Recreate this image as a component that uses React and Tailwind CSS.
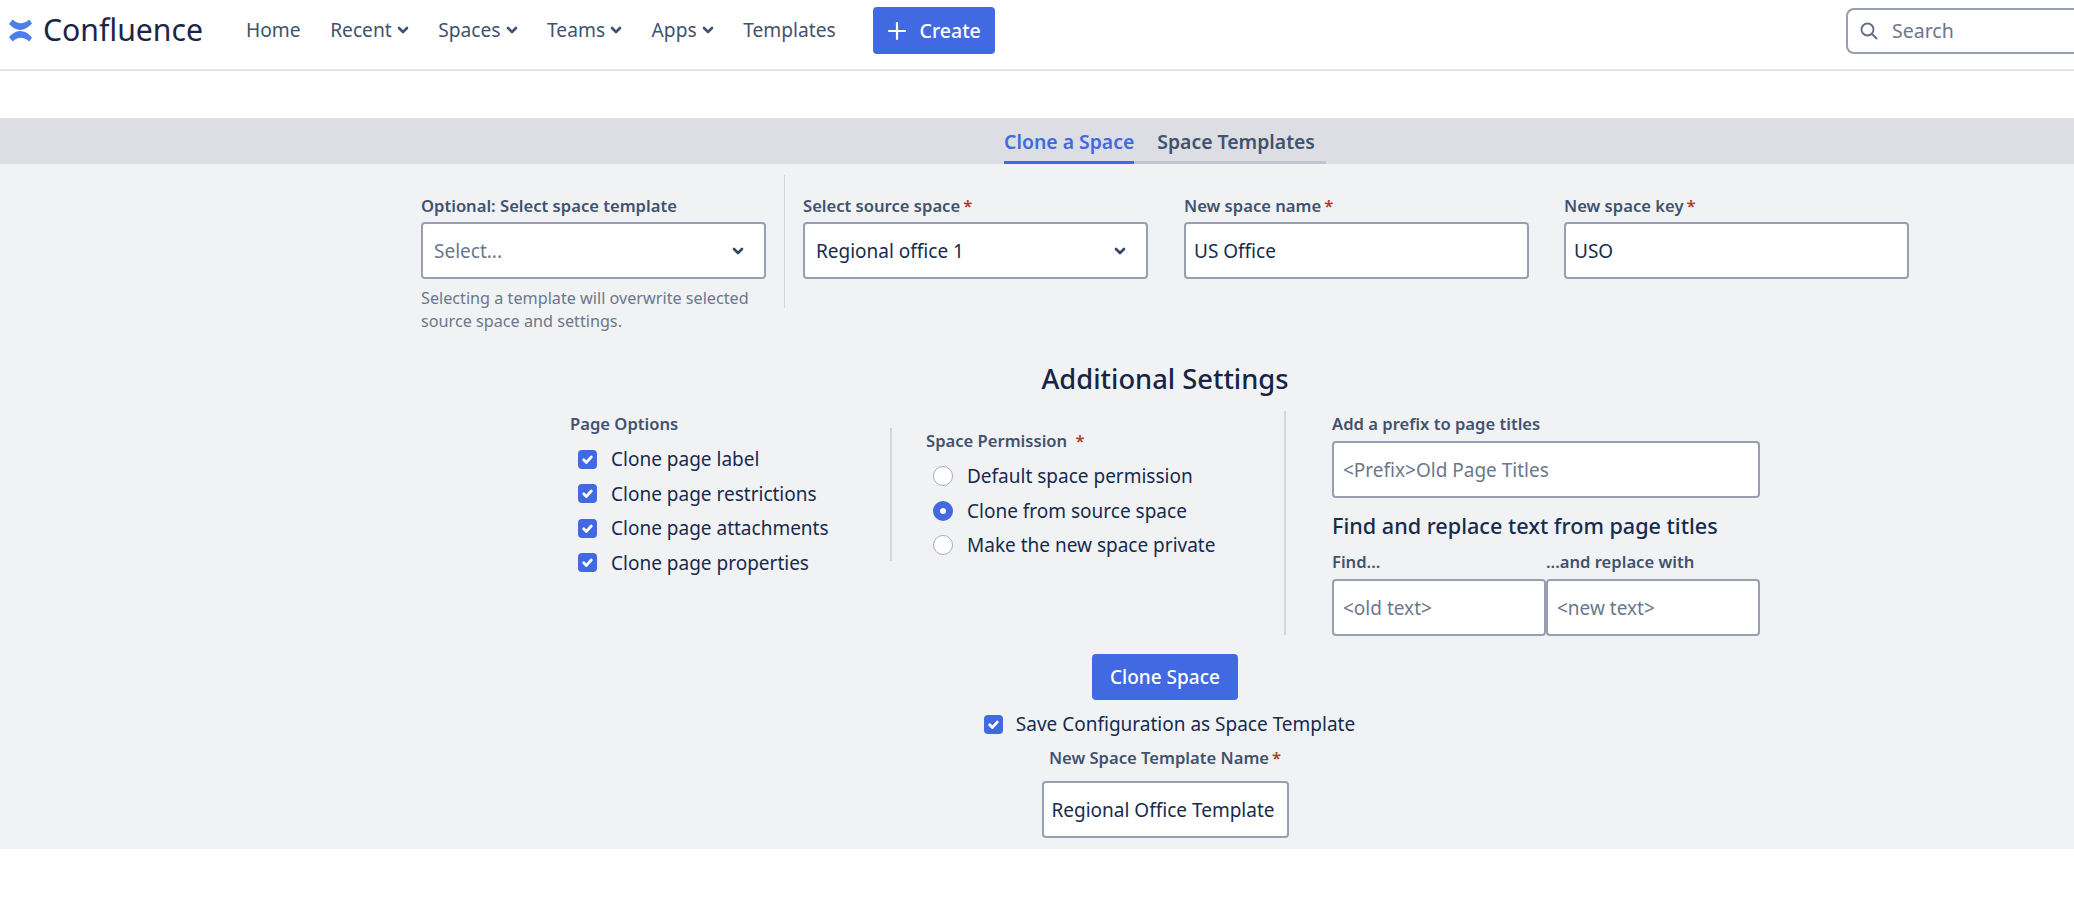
import React from 'react';

const NAV = [
  { label: 'Home' },
  { label: 'Recent', menu: true },
  { label: 'Spaces', menu: true },
  { label: 'Teams', menu: true },
  { label: 'Apps', menu: true },
  { label: 'Templates' },
];

const PAGE_OPTIONS = ['Clone page label', 'Clone page restrictions', 'Clone page attachments', 'Clone page properties'];

const PERMISSIONS = [
  { label: 'Default space permission' },
  { label: 'Clone from source space', checked: true },
  { label: 'Make the new space private' },
];

function Chevron({ className }) {
  return (
    <svg viewBox="0 0 12 8" className={className} fill="none" stroke="currentColor" strokeWidth="2.6" strokeLinecap="round" strokeLinejoin="round">
      <path d="M2 2l4 4 4-4" />
    </svg>
  );
}

function Logo() {
  return (
    <svg viewBox="0 0 24 23" className="h-[23px] w-[24px] shrink-0" fill="#4c7fe8">
      <path d="M1 5L4.7.5Q12.5 8 21.3.5L24 4.5Q12.5 17 1 5Z" />
      <path d="M1 18L4.7 22.5Q12.5 15 21.3 22.5L24 18.5Q12.5 6 1 18Z" />
    </svg>
  );
}

function Label({ children, required, className = '' }) {
  return (
    <div className={`h-[22px] text-[16.6px] leading-[22px] font-semibold whitespace-nowrap text-[#42526e] ${className}`}>
      {children}
      {required && <span className="ml-[3px] text-[#a8402a]">*</span>}
    </div>
  );
}

function Box({ children, placeholder, className = '' }) {
  return (
    <div className={`flex h-[57px] items-center rounded-[4px] border-2 border-[#979fb0] bg-white pt-[1px] text-[19px] whitespace-nowrap ${placeholder ? 'text-[#6b778c]' : 'text-[#172b4d]'} ${className}`}>
      {children}
    </div>
  );
}

function Field({ label, required, value }) {
  return (
    <div className="mt-[20px] w-[345px]">
      <Label required={required}>{label}</Label>
      <Box className="mt-[5px] pl-[8px]">{value}</Box>
    </div>
  );
}

function SelectField({ label, required, value, placeholder }) {
  return (
    <div className="mt-[20px] w-[345px]">
      <Label required={required}>{label}</Label>
      <Box placeholder={placeholder} className="mt-[5px] justify-between pr-[20px] pl-[11px]">
        {value}
        <Chevron className="h-[8px] w-[12px] text-[#344563]" />
      </Box>
    </div>
  );
}

function Checkbox() {
  return (
    <span className="flex h-[19px] w-[19px] shrink-0 items-center justify-center rounded-[4px] bg-[#4169e1]">
      <svg viewBox="0 0 12 12" className="h-[13px] w-[13px]" fill="none" stroke="white" strokeWidth="2.6" strokeLinecap="round" strokeLinejoin="round">
        <path d="M2.5 6.2l2.5 2.5 4.5-5" />
      </svg>
    </span>
  );
}

function Radio({ checked }) {
  return checked ? (
    <span className="flex h-[20px] w-[20px] shrink-0 items-center justify-center rounded-full bg-[#4169e1]">
      <span className="h-[6px] w-[6px] rounded-full bg-white" />
    </span>
  ) : (
    <span className="h-[20px] w-[20px] shrink-0 rounded-full border border-[#a5adba] bg-white" />
  );
}

export default function App() {
  return (
    <div className="h-[900px] overflow-hidden bg-white font-['Noto_Sans',sans-serif] text-[#172b4d]">
      <header className="flex h-[71px] items-center border-b-2 border-[#e4e5e7] pb-[8px] pl-[8px]">
        <Logo />
        <span className="ml-[11px] text-[30.2px] leading-none text-[#1a2648]">Confluence</span>
        <nav className="ml-[43px] flex items-center gap-[29.5px] text-[19.2px] text-[#42526e]">
          {NAV.map((item) => (
            <span key={item.label} className="flex items-center">
              {item.label}
              {item.menu && <Chevron className="ml-[5px] h-[8px] w-[12px] text-[#42526e]" />}
            </span>
          ))}
        </nav>
        <button className="ml-[37px] flex h-[47px] w-[122px] items-center justify-center gap-[13px] rounded-[4px] bg-[#4169e1] text-[19.5px] font-medium text-white">
          <svg viewBox="0 0 20 20" className="h-[20px] w-[20px]" fill="none" stroke="white" strokeWidth="2.2" strokeLinecap="round">
            <path d="M10 2v16M2 10h16" />
          </svg>
          Create
        </button>
        <div className="ml-auto flex h-[46px] w-[228px] items-center gap-[13px] rounded-l-[8px] border-y-2 border-l-2 border-[#979fb0] pl-[11px] text-[19.5px] text-[#6b778c]">
          <svg viewBox="0 0 20 20" className="h-[20px] w-[20px]" fill="none" stroke="#5e6c84" strokeWidth="1.8" strokeLinecap="round">
            <circle cx="8.5" cy="8.5" r="6" />
            <path d="M13 13l4.5 4.5" />
          </svg>
          Search
        </div>
      </header>

      <div className="mt-[47px] flex h-[46px] justify-center bg-[#dcdee3] pl-[256px]">
        <div className="flex items-stretch text-[19.4px] font-semibold">
          <span className="flex items-center border-b-[3px] border-[#4169e1] pt-[5px] text-[#4169e1]">Clone a Space</span>
          <span className="flex items-center border-b-[3px] border-[#c1c4cc] pt-[5px] pr-[11px] pl-[23px] text-[#42526e]">Space Templates</span>
        </div>
      </div>

      <main className="h-[685px] bg-[#f1f2f4] pl-[256px]">
        <div className="flex items-start justify-center pt-[11px]">
          <div className="mt-[20px] w-[345px]">
            <Label>Optional: Select space template</Label>
            <Box placeholder className="mt-[5px] justify-between pr-[20px] pl-[11px]">
              Select...
              <Chevron className="h-[8px] w-[12px] text-[#344563]" />
            </Box>
            <p className="mt-[8px] text-[16.2px] leading-[23px] text-[#6b778c]">
              Selecting a template will overwrite selected source space and settings.
            </p>
          </div>
          <div className="mx-[18px] h-[133px] w-px bg-[#d3d5db]" />
          <SelectField label="Select source space" required value="Regional office 1" />
          <div className="w-[36px]" />
          <Field label="New space name" required value="US Office" />
          <div className="w-[35px]" />
          <Field label="New space key" required value="USO" />
        </div>

        <h2 className="mt-[28px] text-center text-[27.3px] leading-[36px] font-medium text-[#172448]">Additional Settings</h2>

        <div className="mt-[14px] flex items-start justify-center">
          <div className="w-[320px] pt-[2px]">
            <Label>Page Options</Label>
            <div className="mt-[7px]">
              {PAGE_OPTIONS.map((label) => (
                <div key={label} className="flex h-[34.5px] items-center gap-[14px] pl-[8px] text-[19px]">
                  <Checkbox />
                  {label}
                </div>
              ))}
            </div>
          </div>
          <div className="mt-[17px] h-[133px] w-[2px] bg-[#d3d5db]" />
          <div className="w-[392px] pt-[19px] pl-[34px]">
            <Label>
              Space Permission <span className="ml-[4px] text-[#a8402a]">*</span>
            </Label>
            <div className="mt-[7px]">
              {PERMISSIONS.map((item) => (
                <div key={item.label} className="flex h-[34.5px] items-center gap-[14px] pl-[7px] text-[19px]">
                  <Radio checked={item.checked} />
                  {item.label}
                </div>
              ))}
            </div>
          </div>
          <div className="h-[224px] w-[2px] bg-[#d3d5db]" />
          <div className="w-[474px] pt-[2px] pl-[46px]">
            <Label>Add a prefix to page titles</Label>
            <Box placeholder className="mt-[6px] pl-[9px]">&lt;Prefix&gt;Old Page Titles</Box>
            <div className="mt-[12px] text-[21.6px] leading-[32px] font-medium">Find and replace text from page titles</div>
            <div className="mt-[9px] grid grid-cols-2">
              <div>
                <Label>Find...</Label>
                <Box placeholder className="mt-[6px] pl-[9px]">&lt;old text&gt;</Box>
              </div>
              <div>
                <Label>...and replace with</Label>
                <Box placeholder className="mt-[6px] pl-[9px]">&lt;new text&gt;</Box>
              </div>
            </div>
          </div>
        </div>

        <div className="mt-[18px] flex flex-col items-center">
          <button className="h-[46px] w-[146px] rounded-[4px] bg-[#4169e1] text-[19px] font-medium text-white">Clone Space</button>
          <div className="mt-[9px] flex h-[30px] items-center gap-[13px] pl-[9px] text-[19px]">
            <Checkbox />
            Save Configuration as Space Template
          </div>
          <Label required className="mt-[8px]">New Space Template Name</Label>
          <Box className="mt-[12px] w-[247px] pl-[8px]">Regional Office Template</Box>
        </div>
      </main>
    </div>
  );
}
